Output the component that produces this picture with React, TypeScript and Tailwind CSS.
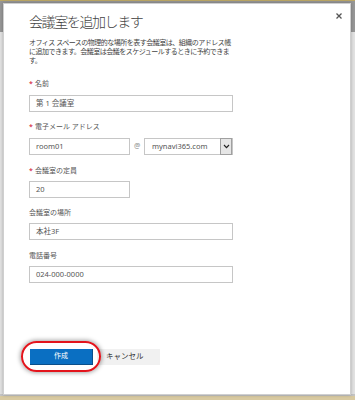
import React from "react";

const font = { fontFamily: '"Noto Sans", "Noto Sans CJK JP", sans-serif' };

function Label({ text, required, className }: { text: string; required?: boolean; className: string }) {
  return (
    <div className={`flex items-center h-[10px] leading-[10px] text-[7px] text-[#555] ${className}`}>
      {required ? (
        <span className="text-[#d0021b] w-[6px] text-[7px] leading-[10px]">*</span>
      ) : null}
      <span>{text}</span>
    </div>
  );
}

function Field({ value, className }: { value: string; className: string }) {
  return (
    <div
      className={`h-[17px] border border-[#c6c6c6] bg-white flex items-center pl-[6px] text-[7.5px] text-[#555] ${className}`}
    >
      {value}
    </div>
  );
}

export default function App() {
  return (
    <div className="relative w-[355px] h-[400px] overflow-hidden bg-[#e1e1e1]" style={font}>
      {/* backdrop: header strip behind the dialog */}
      <div className="h-[1px] bg-[#bba664]" />
      <div className="h-[31px] bg-[#969696]" />
      <div className="absolute left-0 right-0 bottom-0 h-[4px] bg-[#d8c9a0]" />
      <div className="absolute left-0 right-0 bottom-[4px] h-[2px] bg-[#c4c4c4]" />

      {/* dialog */}
      <div className="absolute left-[3px] top-[3px] w-[348px] h-[392px] bg-white border border-[#cfcfcf] shadow-[0_0_3px_rgba(0,0,0,0.25)]">
        <button className="absolute right-[7px] top-[8px] w-[8px] h-[8px]">
          <svg viewBox="0 0 8 8" className="w-[8px] h-[8px]">
            <path d="M1.5 1.5 L6.5 6.5 M6.5 1.5 L1.5 6.5" stroke="#555" strokeWidth="1.3" />
          </svg>
        </button>

        <div className="pl-[25px]">
          <h1 className="pt-[9px] h-[27px] leading-[18px] text-[14px] font-light tracking-[-1.4px] text-[#444]">
            会議室を追加します
          </h1>

          <p className="mt-[7px] text-[7px] leading-[9px] tracking-[-0.5px] text-[#444]">
            オフィス スペースの物理的な場所を表す会議室は、組織のアドレス帳
            <br />
            に追加できます。会議室は会議をスケジュールするときに予約できま
            <br />
            す。
          </p>

          <Label text="名前" required className="mt-[14px]" />
          <Field value="第 1 会議室" className="mt-[6px] w-[204px]" />

          <Label text="電子メール アドレス" required className="mt-[10px]" />
          <div className="mt-[6px] flex items-center">
            <Field value="room01" className="w-[101px]" />
            <span className="ml-[4px] w-[10px] text-[7px] text-[#888]">@</span>
            <div className="h-[17px] w-[89px] border border-[#c6c6c6] flex items-center">
              <span className="flex-1 pl-[7px] text-[7.5px] text-[#555]">mynavi365.com</span>
              <span className="h-[17px] w-[12px] border border-[#a0a0a0] bg-[#e6e6e6] flex items-center justify-center">
                <svg viewBox="0 0 8 6" className="w-[7px] h-[5px]">
                  <path d="M1 1.2 L4 4.4 L7 1.2" stroke="#222" strokeWidth="1.4" fill="none" />
                </svg>
              </span>
            </div>
          </div>

          <Label text="会議室の定員" required className="mt-[11px]" />
          <Field value="20" className="mt-[5px] w-[101px]" />

          <Label text="会議室の場所" className="mt-[10px]" />
          <Field value="本社3F" className="mt-[5px] w-[204px]" />

          <Label text="電話番号" className="mt-[11px]" />
          <Field value="024-000-0000" className="mt-[5px] w-[204px]" />

          <div className="mt-[66px] flex items-center">
            <div className="relative">
              <div className="absolute left-[-8px] top-[-8px] w-[80px] h-[31px] rounded-full border-[2.5px] border-[#e3141c] shadow-[0_0_4px_1px_rgba(0,0,0,0.35)]" />
              <button className="relative ml-[1px] h-[16px] w-[63px] bg-[#0a6fc2] border-b border-r border-[#0b4f8a] text-white text-[7px] flex items-center justify-center">
                作成
              </button>
            </div>
            <button className="ml-[4px] h-[16px] w-[63px] bg-[#f1f1f1] text-[#333] text-[7.5px] flex items-center pl-[9px]">
              キャンセル
            </button>
          </div>
        </div>
      </div>
    </div>
  );
}
